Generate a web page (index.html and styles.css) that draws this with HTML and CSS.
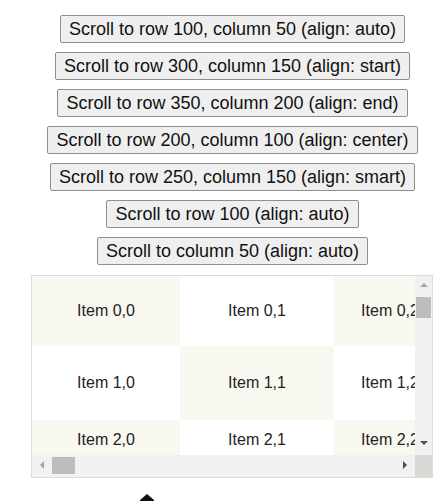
FILE: index.html
```html
<!DOCTYPE html>
<html>
<head>
<meta charset="utf-8">
<link rel="stylesheet" href="styles.css">
</head>
<body>
<div class="controls">
  <button class="btn">Scroll to row 100, column 50 (align: auto)</button>
  <button class="btn">Scroll to row 300, column 150 (align: start)</button>
  <button class="btn">Scroll to row 350, column 200 (align: end)</button>
  <button class="btn">Scroll to row 200, column 100 (align: center)</button>
  <button class="btn">Scroll to row 250, column 150 (align: smart)</button>
  <button class="btn">Scroll to row 100 (align: auto)</button>
  <button class="btn">Scroll to column 50 (align: auto)</button>
</div>
<div class="grid-box">
  <div class="viewport">
    <div class="cells">
      <div class="cell alt">Item 0,0</div><div class="cell">Item 0,1</div><div class="cell alt">Item 0,2</div>
      <div class="cell r1">Item 1,0</div><div class="cell r1 alt">Item 1,1</div><div class="cell r1">Item 1,2</div>
      <div class="cell r2 alt">Item 2,0</div><div class="cell r2">Item 2,1</div><div class="cell r2 alt">Item 2,2</div>
    </div>
  </div>
  <div class="vbar">
    <div class="arrow up"></div>
    <div class="vthumb"></div>
    <div class="vspace"></div>
    <div class="arrow down"></div>
  </div>
  <div class="hbar">
    <div class="arrow left"></div>
    <div class="hthumb"></div>
    <div class="hspace"></div>
    <div class="arrow right"></div>
  </div>
  <div class="corner"></div>
</div>
<div class="logo-row">
  <svg class="logo" width="20" height="12" viewBox="0 0 20 12"><path d="M10 2 L17 8 L17 12 L3 12 L3 8 Z" fill="#111"/></svg>
</div>
</body>
</html>
```
FILE: styles.css
```css
html, body {
  margin: 0;
  padding: 0;
  background: #fff;
  font-family: "Liberation Sans", Arial, sans-serif;
  overflow: hidden;
}
.controls {
  display: flex;
  flex-direction: column;
  align-items: center;
  gap: 9px;
  padding-top: 15px;
  padding-left: 29px;
}
.btn {
  font-family: "Liberation Sans", Arial, sans-serif;
  font-size: 18px;
  line-height: 20px;
  height: 28px;
  padding: 0 8px;
  background: #efefef;
  color: #111;
  border: 1px solid #8f8f8f;
  border-radius: 2px;
}
.grid-box {
  margin: 10px 0 0 31px;
  width: 400px;
  border: 1px solid #dcdcdc;
  display: grid;
  grid-template-columns: 383px 17px;
  grid-template-rows: 179px 22px;
}
.viewport {
  overflow: hidden;
}
.cells {
  display: grid;
  grid-template-columns: 148px 154px 112px;
  grid-template-rows: 70px 74px 40px;
  width: 414px;
}
.cell {
  display: flex;
  align-items: center;
  justify-content: center;
  font-size: 16px;
  color: #222;
  background: #fff;
  white-space: nowrap;
}
.cell.alt {
  background: #f8f8f0;
}
.vbar {
  background: #f1f1f1;
  display: flex;
  flex-direction: column;
  align-items: center;
}
.hbar {
  background: #f1f1f1;
  display: flex;
  align-items: center;
  padding-bottom: 2px;
}
.corner {
  background: #d9d8d5;
}
.arrow {
  width: 0;
  height: 0;
  flex: none;
}
.arrow.up {
  margin: 7px 0 5px;
  border-left: 4px solid transparent;
  border-right: 4px solid transparent;
  border-bottom: 4px solid #a3a3a3;
}
.arrow.down {
  margin: 0 0 10px;
  border-left: 4px solid transparent;
  border-right: 4px solid transparent;
  border-top: 4px solid #505050;
}
.arrow.left {
  margin: 0 8px 0 8px;
  border-top: 4px solid transparent;
  border-bottom: 4px solid transparent;
  border-right: 4px solid #a3a3a3;
}
.arrow.right {
  margin: 0 8px 0 0;
  border-top: 4px solid transparent;
  border-bottom: 4px solid transparent;
  border-left: 4px solid #505050;
}
.vthumb {
  width: 15px;
  height: 21px;
  margin-top: 5px;
  background: #bdbdbd;
  flex: none;
}
.vspace, .hspace {
  flex: 1;
}
.hthumb {
  width: 23px;
  height: 17px;
  background: #bdbdbd;
  flex: none;
}
.logo-row {
  padding: 14px 0 0 137px;
}
.logo {
  display: block;
}
```
